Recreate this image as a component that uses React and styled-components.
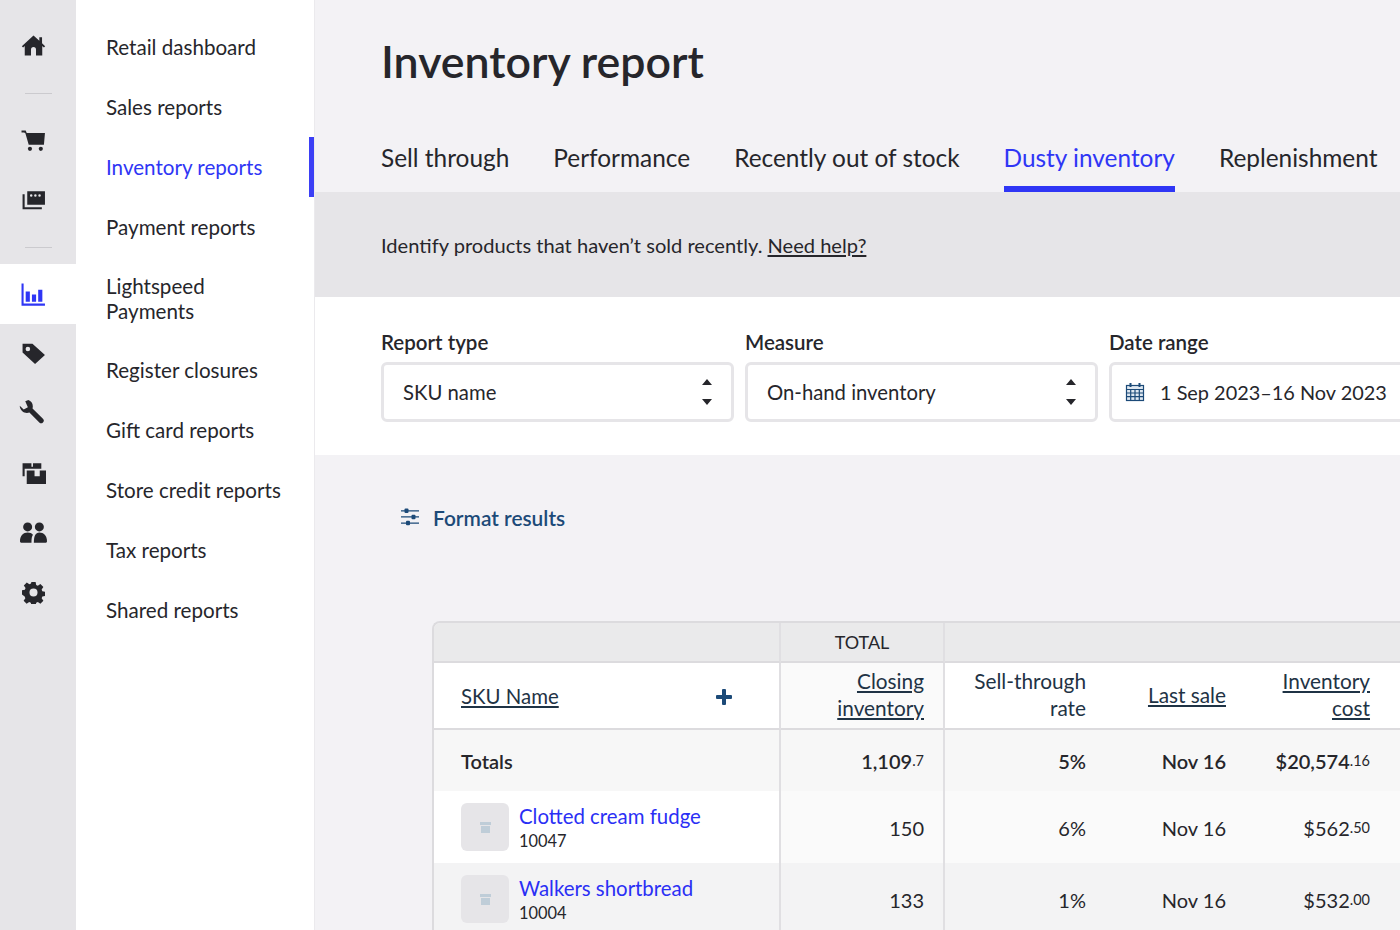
import React from 'react'
import styled, { createGlobalStyle } from 'styled-components'

const GlobalStyle = createGlobalStyle`
  html, body {
    margin: 0;
    padding: 0;
    height: 100%;
    overflow: hidden;
    background: #f3f2f5;
  }
  body {
    font-family: Lato, "Open Sans", sans-serif;
    color: #26262b;
  }
  * { box-sizing: border-box; }
`

const Page = styled.div`
  display: flex;
  width: 1400px;
  height: 930px;
  overflow: hidden;
`

const Rail = styled.aside`
  flex: 0 0 76px;
  background: #e6e5e8;
  display: flex;
  flex-direction: column;
  padding-top: 15px;
`

const RailItem = styled.div`
  height: ${p => p.$h || 60}px;
  flex-shrink: 0;
  display: flex;
  align-items: center;
  justify-content: center;
  padding-right: ${p => p.$pr || 10}px;
  background: ${p => (p.$active ? '#fff' : 'transparent')};
  color: ${p => (p.$active ? '#2f36f5' : '#26262b')};
`

const RailDivider = styled.div`
  width: 27px;
  height: 1px;
  flex-shrink: 0;
  background: #cbcace;
  margin: ${p => p.$m};
`

const SideNav = styled.nav`
  flex: 0 0 239px;
  background: #fff;
  border-right: 1px solid #ebeaed;
  padding-top: 17px;
  display: flex;
  flex-direction: column;
`

const NavItem = styled.a`
  position: relative;
  display: flex;
  align-items: center;
  min-height: ${p => (p.$tall ? 83 : 60)}px;
  padding: 0 30px;
  font-size: 20.6px;
  line-height: 25px;
  color: ${p => (p.$active ? '#2f36f5' : '#26262b')};
  flex-shrink: 0;
  &::after {
    content: '';
    display: ${p => (p.$active ? 'block' : 'none')};
    position: absolute;
    right: 0;
    top: 0;
    bottom: 0;
    width: 5px;
    background: #3b3ff5;
  }
`

const Main = styled.main`
  flex: 1;
  min-width: 0;
  display: flex;
  flex-direction: column;
`

const Header = styled.header`
  height: 192px;
  flex-shrink: 0;
  padding: 34px 0 0 66px;
  background: #f3f2f5;
`

const Title = styled.h1`
  margin: 0;
  font-size: 44.7px;
  line-height: 54px;
  font-weight: 600;
  color: #26262b;
`

const Tabs = styled.div`
  display: flex;
  gap: 44px;
  margin-top: 40px;
  white-space: nowrap;
`

const Tab = styled.a`
  height: 64px;
  padding-top: 15px;
  font-size: 24.42px;
  line-height: 30px;
  color: ${p => (p.$active ? '#2f36f5' : '#26262b')};
  border-bottom: ${p => (p.$active ? '6px solid #2f36f5' : 'none')};
`

const HelpBar = styled.div`
  height: 105px;
  flex-shrink: 0;
  padding: 40px 0 0 66px;
  background: #e6e5e8;
  font-size: 20.1px;
  line-height: 26px;
  color: #26262b;
  a { text-decoration: underline; }
`

const Filters = styled.section`
  height: 158px;
  flex-shrink: 0;
  padding: 32px 0 0 66px;
  background: #fff;
  display: flex;
  gap: 11.5px;
`

const Field = styled.div`
  flex: 0 0 352.5px;
`

const FieldLabel = styled.label`
  display: block;
  font-size: 20.5px;
  line-height: 26px;
  font-weight: 600;
  margin-bottom: 7px;
`

const Select = styled.div`
  height: 60px;
  border: 3px solid #e6e5e8;
  border-radius: 6px;
  display: flex;
  align-items: center;
  justify-content: space-between;
  padding: 0 18px 0 19px;
  font-size: 20.3px;
  color: #26262b;
  white-space: nowrap;
`

const DateValue = styled.span`
  display: flex;
  align-items: center;
  gap: 15px;
  margin-left: -6px;
  font-size: 19.9px;
`

const FormatLink = styled.a`
  display: flex;
  align-items: center;
  flex-shrink: 0;
  gap: 13px;
  margin: 49px 0 0 85px;
  height: 26px;
  font-size: 20.9px;
  font-weight: 600;
  color: #1c4a78;
`

const TableWrap = styled.div`
  flex-shrink: 0;
  margin: 91px 0 0 117px;
  width: 1100px;
  border: 2px solid #dcdbde;
  border-right: none;
  border-bottom: none;
  border-top-left-radius: 8px;
  overflow: hidden;
`

const Table = styled.table`
  border-collapse: separate;
  border-spacing: 0;
  table-layout: fixed;
  width: 1100px;
  font-size: 20px;
  color: #26262b;
`

const Th = styled.th`
  height: ${p => p.$h}px;
  background: ${p => p.$bg || '#fff'};
  border-right: ${p => (p.$line ? '2px solid #e0dfe2' : 'none')};
  border-bottom: 2px solid #dcdbde;
  padding: ${p => p.$pad || '0 20px 0 0'};
  text-align: ${p => p.$align || 'right'};
  font-size: ${p => p.$size || 20.8}px;
  font-weight: 400;
  line-height: 27px;
  color: ${p => p.$color || '#1f3345'};
  vertical-align: middle;
`

const Underlined = styled.span`
  text-decoration: underline;
  text-underline-offset: 2px;
`

const ThInner = styled.div`
  display: flex;
  align-items: center;
  justify-content: space-between;
  padding-right: 47px;
  font-size: 20.4px;
`

const Td = styled.td`
  height: ${p => p.$h}px;
  background: ${p => p.$bg};
  border-right: ${p => (p.$line ? '2px solid #e0dfe2' : 'none')};
  padding: ${p => p.$pad || '0 20px 0 0'};
  text-align: ${p => p.$align || 'right'};
  font-weight: ${p => (p.$strong ? 600 : 400)};
  font-size: 20px;
  vertical-align: middle;
  white-space: nowrap;
`

const Cents = styled.span`
  font-size: 14.5px;
  font-weight: 400;
  vertical-align: 3px;
`

const Product = styled.div`
  display: flex;
  align-items: center;
  gap: 10px;
`

const Thumb = styled.div`
  width: 48px;
  height: 48px;
  border-radius: 6px;
  background: #e6e5e8;
  display: flex;
  align-items: center;
  justify-content: center;
`

const ProductText = styled.div`
  margin-top: 2px;
`

const ProductName = styled.a`
  display: block;
  color: #2a2ff5;
  font-size: 20.4px;
  font-weight: 400;
  line-height: 25px;
  text-align: left;
`

const Sku = styled.div`
  font-size: 16.4px;
  line-height: 24px;
  font-weight: 400;
  text-align: left;
`

const Icon = ({ children, size = 25 }) => (
  <svg width={size} height={size} viewBox="0 0 24 24" fill="currentColor">{children}</svg>
)

const HomeIcon = () => (
  <Icon><path d="M12 2.5 0.8 12.6l1.2 1.2 1.6-1.3v9h6v-5.6a2.4 2.4 0 0 1 4.8 0v5.6h6v-9l1.6 1.3 1.2-1.2-3-2.8V4h-2.6v3.4z" /></Icon>
)
const CartIcon = () => (
  <Icon><path d="M0.5 2.5h4l1 2.2H23l-1 11.3H7.4L4.2 5 3 4.4H0.5z" /><circle cx="8.6" cy="20" r="2" /><circle cx="19" cy="20" r="2" /></Icon>
)
const CardsIcon = () => (
  <Icon>
    <path d="M6 3h17v13H6zM8.6 7.2a1.2 1.2 0 1 0 2.4 0 1.2 1.2 0 0 0-2.4 0zm4 0a1.2 1.2 0 1 0 2.4 0 1.2 1.2 0 0 0-2.4 0zm4 0a1.2 1.2 0 1 0 2.4 0 1.2 1.2 0 0 0-2.4 0z" fillRule="evenodd" />
    <path d="M3.5 6v12.5H20v2H1.5V6z" />
  </Icon>
)
const ChartIcon = () => (
  <Icon>
    <path d="M0.5 1.5h2v19.2h20.5v2H.5z" />
    <path d="M4.5 9h4v10h-4zM10.5 12h4v7h-4zM16.5 7.5h4V19h-4z" />
  </Icon>
)
const TagIcon = () => (
  <Icon><path fillRule="evenodd" d="M1.5 3.5h9.5L23 14.5 13.5 23 1.5 12zM6.6 6.4a2.2 2.2 0 1 0 0 4.4 2.2 2.2 0 0 0 0-4.4z" /></Icon>
)
const WrenchIcon = () => (
  <Icon><path d="M9 1C12 2 14 5 13 9L23 19A2.2 2.2 0 0 1 19.5 22.5L10 13C6 14.5 1 12 .7 6.5L4.5 10 8.5 8 6 2.2z" /></Icon>
)
const BoxesIcon = () => (
  <Icon>
    <path d="M1.5 3h8.5v3.5h1.5V3h8v5.5H3.5V15.500H1.500z" />
    <path d="M5.500 10h7.500v5.500h5V10h6.500v13H5.500z" />
  </Icon>
)
const PeopleIcon = () => (
  <Icon size={27}>
    <circle cx="6.8" cy="7" r="4" />
    <circle cx="17.2" cy="7" r="4" />
    <path d="M0 20c0-5.500 3-8 6.800-8 2 0 3.700.7 4.700 2-1 1.500-1.300 3.500-1.300 7H1a1 1 0 0 1-1-1z" />
    <path d="M12.300 21c0-5.800 1.500-9 4.900-9 3.800 0 6.800 2.500 6.800 8a1 1 0 0 1-1 1z" />
  </Icon>
)
const GearIcon = () => (
  <Icon size={23}>
    <path fillRule="evenodd" d="M9.800 1h4.400l.6 3.200 1.700.7 2.700-1.800 3.100 3.100-1.800 2.700.7 1.700 3.100.6v4.400l-3.100.6-.7 1.700 1.800 2.700-3.100 3.100-2.700-1.800-1.700.7-.6 3.200H9.800l-.6-3.200-1.700-.7-2.700 1.800-3.100-3.100 1.800-2.700-.7-1.700L-.1 14v-4.400l3.100-.6.7-1.700-1.800-2.700L5 1.500l2.700 1.800 1.700-.7zM12 7.800a4.200 4.200 0 1 0 0 8.400 4.200 4.200 0 0 0 0-8.400z" />
  </Icon>
)
const UpDown = () => (
  <svg width="12" height="30" viewBox="0 0 12 30" fill="#26262b">
    <path d="M6 2 11 8H1zM1 22h10l-5 6z" />
  </svg>
)
const CalendarIcon = () => (
  <svg width="20" height="20" viewBox="0 0 20 20" fill="none" stroke="#1c4a78" strokeWidth="1.2">
    <rect x="1.5" y="3.5" width="17" height="15" fill="#dfe8f1" />
    <path d="M1.5 7.500h17M1.500 11h17M1.500 14.700h17M5.700 7.500v11M10 7.500v11M14.300 7.500v11" />
    <path d="M5.500 1v4M14.500 1v4" strokeWidth="2" />
  </svg>
)
const SlidersIcon = () => (
  <svg width="20" height="20" viewBox="0 0 20 20" fill="#1c4a78">
    <path d="M1 3.200h18v1.300H1zM1 9.300h18v1.300H1zM1 15.500h18v1.300H1z" />
    <rect x="4.5" y="1.5" width="4" height="4.5" rx="1" />
    <rect x="11.5" y="7.7" width="4" height="4.5" rx="1" />
    <rect x="6" y="13.8" width="4" height="4.5" rx="1" />
  </svg>
)
const PlusIcon = () => (
  <svg width="16" height="16" viewBox="0 0 16 16" fill="#1c4a78">
    <rect x="6" y="0" width="4" height="16" rx="1" />
    <rect x="0" y="6" width="16" height="4" rx="1" />
  </svg>
)
const BoxIcon = () => (
  <svg width="11" height="11" viewBox="0 0 11 11" fill="#bfcdd8">
    <path d="M0 0h11v3H0zM1 4h9v7H1z" />
  </svg>
)

const navItems = [
  'Retail dashboard',
  'Sales reports',
  'Inventory reports',
  'Payment reports',
  'Lightspeed Payments',
  'Register closures',
  'Gift card reports',
  'Store credit reports',
  'Tax reports',
  'Shared reports',
]

const tabs = ['Sell through', 'Performance', 'Recently out of stock', 'Dusty inventory', 'Replenishment']

const products = [
  { name: 'Clotted cream fudge', sku: '10047', qty: '150', rate: '6%', cost: '$562', cents: '.50', a: '#fff', b: '#fafafa' },
  { name: 'Walkers shortbread', sku: '10004', qty: '133', rate: '1%', cost: '$532', cents: '.00', a: '#f3f3f4', b: '#f3f3f4' },
]

const rowPad = '2px 20px 0 0'

export default function App() {
  return (
    <Page>
      <GlobalStyle />
      <Rail>
        <RailItem><HomeIcon /></RailItem>
        <RailDivider $m="18px auto 16px" />
        <RailItem><CartIcon /></RailItem>
        <RailItem><CardsIcon /></RailItem>
        <RailDivider $m="17px auto 16px" />
        <RailItem $active><ChartIcon /></RailItem>
        <RailItem $h={56}><TagIcon /></RailItem>
        <RailItem $h={62} $pr={14}><WrenchIcon /></RailItem>
        <RailItem><BoxesIcon /></RailItem>
        <RailItem><PeopleIcon /></RailItem>
        <RailItem><GearIcon /></RailItem>
      </Rail>

      <SideNav>
        {navItems.map(item => (
          <NavItem key={item} $active={item === 'Inventory reports'} $tall={item === 'Lightspeed Payments'}>{item}</NavItem>
        ))}
      </SideNav>

      <Main>
        <Header>
          <Title>Inventory report</Title>
          <Tabs>
            {tabs.map(t => (
              <Tab key={t} $active={t === 'Dusty inventory'}>{t}</Tab>
            ))}
          </Tabs>
        </Header>

        <HelpBar>Identify products that haven’t sold recently. <a>Need help?</a></HelpBar>

        <Filters>
          <Field>
            <FieldLabel>Report type</FieldLabel>
            <Select>SKU name<UpDown /></Select>
          </Field>
          <Field>
            <FieldLabel>Measure</FieldLabel>
            <Select>On-hand inventory<UpDown /></Select>
          </Field>
          <Field>
            <FieldLabel>Date range</FieldLabel>
            <Select><DateValue><CalendarIcon />1 Sep 2023–16 Nov 2023</DateValue></Select>
          </Field>
        </Filters>

        <FormatLink><SlidersIcon />Format results</FormatLink>

        <TableWrap>
          <Table>
            <colgroup>
              <col style={{ width: 347 }} />
              <col style={{ width: 164 }} />
              <col style={{ width: 161 }} />
              <col style={{ width: 140 }} />
              <col style={{ width: 144 }} />
              <col />
            </colgroup>
            <thead>
              <tr>
                <Th $h={40} $bg="#eaeaeb" $line />
                <Th $h={40} $bg="#eaeaeb" $line $align="center" $size={18} $color="#26262b" $pad="0">TOTAL</Th>
                <Th $h={40} $bg="#eaeaeb" colSpan={4} />
              </tr>
              <tr>
                <Th $h={67} $line $align="left" $pad="2px 0 0 27px">
                  <ThInner><Underlined>SKU Name</Underlined><PlusIcon /></ThInner>
                </Th>
                <Th $h={67} $line $bg="#fafafa" $pad="0 19px 4px 0"><Underlined>Closing inventory</Underlined></Th>
                <Th $h={67} $pad="0 20px 4px 0">Sell-through rate</Th>
                <Th $h={67} $pad="0 20px 2px 0"><Underlined>Last sale</Underlined></Th>
                <Th $h={67} $pad="0 20px 4px 0"><Underlined>Inventory cost</Underlined></Th>
                <Th $h={67} />
              </tr>
            </thead>
            <tbody>
              <tr>
                <Td $h={61} $bg="#f7f7f7" $line $align="left" $pad="0 0 0 27px" $strong>Totals</Td>
                <Td $h={61} $bg="#f7f7f7" $line $strong $pad="0 19px 0 0">1,109<Cents>.7</Cents></Td>
                <Td $h={61} $bg="#f7f7f7" $strong>5%</Td>
                <Td $h={61} $bg="#f7f7f7" $strong>Nov 16</Td>
                <Td $h={61} $bg="#f7f7f7" $strong>$20,574<Cents>.16</Cents></Td>
                <Td $h={61} $bg="#f7f7f7" />
              </tr>
              {products.map(p => (
                <tr key={p.sku}>
                  <Td $h={72} $bg={p.a} $line $align="left" $pad="0 0 0 27px">
                    <Product>
                      <Thumb><BoxIcon /></Thumb>
                      <ProductText>
                        <ProductName>{p.name}</ProductName>
                        <Sku>{p.sku}</Sku>
                      </ProductText>
                    </Product>
                  </Td>
                  <Td $h={72} $bg={p.b} $line $pad="2px 19px 0 0">{p.qty}</Td>
                  <Td $h={72} $bg={p.b} $pad={rowPad}>{p.rate}</Td>
                  <Td $h={72} $bg={p.b} $pad={rowPad}>Nov 16</Td>
                  <Td $h={72} $bg={p.b} $pad={rowPad}>{p.cost}<Cents>{p.cents}</Cents></Td>
                  <Td $h={72} $bg={p.b} />
                </tr>
              ))}
            </tbody>
          </Table>
        </TableWrap>
      </Main>
    </Page>
  )
}
